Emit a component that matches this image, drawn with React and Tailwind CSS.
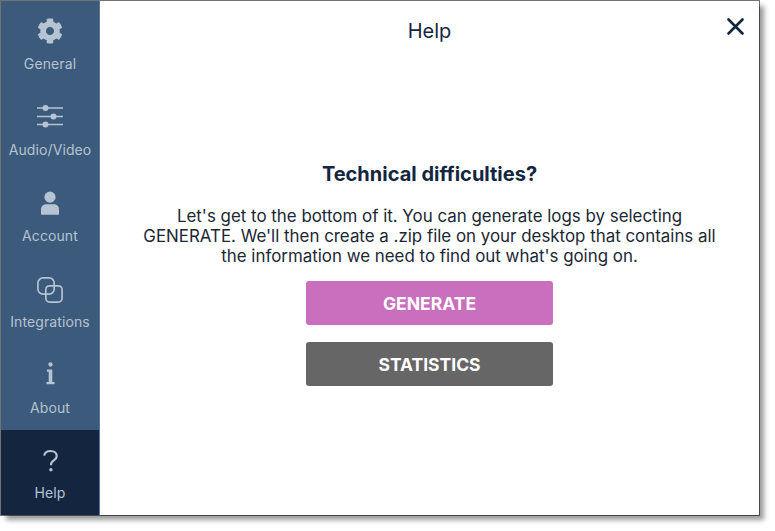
import React from 'react';
import { FaCog } from 'react-icons/fa';

const Sliders = () => (
  <svg width="26" height="24" viewBox="0 0 26 24" fill="none" stroke="currentColor" strokeWidth="1.6" className="-mt-[2px]">
    <path d="M0 4h26M0 12.500h26M0 20.500h26" />
    <circle cx="8.5" cy="4" r="3" fill="currentColor" stroke="none" />
    <circle cx="16.5" cy="12.500" r="3" fill="currentColor" stroke="none" />
    <circle cx="8.5" cy="20.500" r="3" fill="currentColor" stroke="none" />
  </svg>
);

const User = () => (
  <svg width="18" height="24" viewBox="0 0 20 26" fill="currentColor">
    <circle cx="10" cy="6.5" r="6.2" />
    <path d="M0 26v-6c0-3 2.5-5.5 5.5-5.5h9c3 0 5.500 2.500 5.500 5.500v6z" />
  </svg>
);

const Squares = () => (
  <svg width="26" height="26" viewBox="0 0 28 28" fill="none" stroke="currentColor" strokeWidth="1.8" className="mt-[2px]">
    <rect x="1" y="1" width="17.500" height="17.500" rx="5.500" />
    <rect x="9.500" y="9.500" width="17.500" height="17.500" rx="4" />
  </svg>
);

const InfoI = () => (
  <svg width="9" height="25" viewBox="0 0 10 25" fill="currentColor" className="-mt-[2px]">
    <circle cx="5" cy="2.500" r="2.400" />
    <path d="M1 8h6v14h2.500v2.500H.5V22H3V10.500H1z" />
  </svg>
);

const Question = () => (
  <svg width="15" height="24" viewBox="0 0 18 26" fill="none" stroke="currentColor" strokeWidth="2.600" className="mt-[1px]">
    <path d="M1.500 6.500C2 3 5 1 9 1c4.500 0 7.500 2.500 7.500 6 0 2.500-1.300 3.800-3.500 5.300C10.800 13.800 9.500 15 9.500 18" />
    <circle cx="9.500" cy="23.500" r="2" fill="currentColor" stroke="none" />
  </svg>
);

const items = [
  { label: 'General', icon: <FaCog size={26} /> },
  { label: 'Audio/Video', icon: <Sliders /> },
  { label: 'Account', icon: <User /> },
  { label: 'Integrations', icon: <Squares /> },
  { label: 'About', icon: <InfoI /> },
  { label: 'Help', icon: <Question />, active: true },
];

export default function App() {
  return (
    <div className="w-[775px] h-[531px] bg-white pt-px pl-px font-['Inter',sans-serif]">
      <div className="relative w-[758px] h-[514px] flex bg-white shadow-[0_0_0_1px_rgba(0,0,0,0.55),5px_5px_5px_rgba(0,0,0,0.4)]">
        <aside className="w-[99px] h-full flex flex-col bg-[#3c5a7b] border-r border-[#5a7696]">
          {items.map((item) => (
            <div
              key={item.label}
              className={`flex flex-col items-center text-[#b5c3d2] ${item.active ? 'flex-1 bg-[#14263f]' : 'h-[85.8px]'}`}
            >
              <div className="h-[55.4px] flex items-center justify-center pt-[5px]">{item.icon}</div>
              <span className="text-[14px] leading-[16px] tracking-[0.1px]">{item.label}</span>
            </div>
          ))}
        </aside>
        <main className="flex-1 flex flex-col items-center text-[#14263f]">
          <h1 className="mt-[18px] text-[20px] leading-[24px] font-normal">Help</h1>
          <h2 className="mt-[119px] text-[20px] leading-[24px] font-bold">Technical difficulties?</h2>
          <p className="mt-[20px] w-[580px] text-center text-[16.9px] leading-[20px] text-[#1b2735]">
            Let's get to the bottom of it. You can generate logs by selecting GENERATE. We'll then create a .zip file on your desktop that contains all the information we need to find out what's going on.
          </p>
          <button className="mt-[15px] w-[247px] h-[44px] pt-[2px] rounded-[3px] bg-[#c96fbd] text-white text-[17.5px] font-bold">GENERATE</button>
          <button className="mt-[17px] w-[247px] h-[44px] pt-[2px] rounded-[3px] bg-[#666666] text-white text-[17.5px] font-bold">STATISTICS</button>
        </main>
        <button className="absolute top-[17px] right-[15px] text-[#14263f]">
          <svg width="17" height="17" viewBox="0 0 17 17" stroke="currentColor" strokeWidth="2.600" strokeLinecap="round" className="block">
            <path d="M1.500 1.500l14 14M15.500 1.500l-14 14" />
          </svg>
        </button>
      </div>
    </div>
  );
}
